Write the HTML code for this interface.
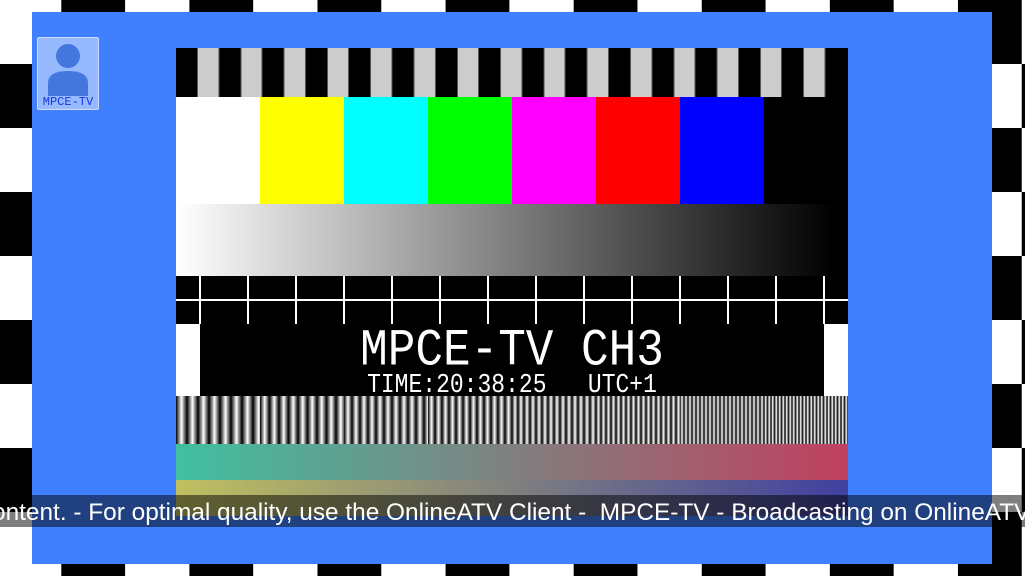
<!DOCTYPE html>
<html><head><meta charset="utf-8"><style>
*{margin:0;padding:0;box-sizing:border-box}
body{width:1025px;height:576px;overflow:hidden;position:relative;background:#fff;
background-image:conic-gradient(#000 25%,#fff 0 50%,#000 0 75%,#fff 0);
background-size:128.1px 128px;background-position:-3px 0}
.a{position:absolute}
.frame{left:32px;top:12px;width:960px;height:552px;background:#4080ff}
.card{left:176px;top:48px;width:672px;height:468px;background:#000;overflow:hidden}
.stripes{left:0;top:0;width:652px;height:49px;background:repeating-linear-gradient(90deg,#000 0 21px,#555 21px 22px,#ccc 22px 42.3px,#555 42.3px 43.3px)}
.bars{left:0;top:49px;height:107px;width:672px;display:flex}
.bars div{width:84px;height:100%}
.ramp{left:0;top:156px;width:659px;height:72px;background:linear-gradient(90deg,#fff,#000)}
.grid{left:0;top:228px;width:672px;height:48px;
background:linear-gradient(#fff,#fff) 0 23px/100% 2px no-repeat,
repeating-linear-gradient(90deg,transparent 0 23px,#fff 23px 25px,transparent 25px 48px)}
.wb{top:276px;width:24px;height:72px;background:#fff}
.title{left:0;width:672px;text-align:center;color:#fff;font-family:"Liberation Mono",monospace}
.sweep{top:348px;height:48px;width:84px}
.g1{left:0;top:396px;width:672px;height:36px;background:linear-gradient(90deg,#40c0a0,#808080 50%,#c04060)}
.g2{left:0;top:432px;width:672px;height:36px;background:linear-gradient(90deg,#c0c060,#808080 50%,#4040a0)}
.ticker{left:0;top:495px;width:1025px;height:32px;background:rgba(0,0,0,0.5);color:#fff;font-family:"Liberation Sans",sans-serif;font-size:24.4px;line-height:36px;white-space:nowrap;overflow:hidden}
.av{left:37px;top:37px;width:62px;height:73px;background:rgba(255,255,255,0.45);border:1px solid rgba(255,255,255,0.5);border-radius:2px}
</style></head><body>
<div class="a frame"></div>
<div class="a av">
<svg class="a" style="left:0;top:0" width="62" height="60" viewBox="0 0 62 60">
<circle cx="30" cy="18" r="12" fill="#4477dd"/>
<path d="M10 58 V45 Q10 33 30 33 Q50 33 50 45 V58 Z" fill="#4477dd"/>
</svg>
<div class="a" style="left:0;top:58px;width:60px;text-align:center;color:#1838e0;font-family:'Liberation Mono',monospace;font-size:12px;line-height:12px">MPCE-TV</div>
</div>
<div class="a card">
<div class="a stripes"></div>
<div class="a bars"><div style="background:#fff"></div><div style="background:#ff0"></div><div style="background:#0ff"></div><div style="background:#0f0"></div><div style="background:#f0f"></div><div style="background:#f00"></div><div style="background:#00f"></div><div style="background:#000"></div></div>
<div class="a ramp"></div>
<div class="a grid"></div>
<div class="a wb" style="left:0"></div>
<div class="a wb" style="left:648px"></div>
<div class="a title" style="top:276px;font-size:46px;line-height:48px;transform:scaleY(1.12);transform-origin:0 0">MPCE-TV CH3</div>
<div class="a title" style="top:322px;font-size:23px;line-height:26px;white-space:pre;transform:scaleY(1.15);transform-origin:0 0">TIME:20:38:25   UTC+1</div>
<div class="a sweep" style="left:0;background:repeating-linear-gradient(90deg,#000,#fff 5.5px,#000 11px)"></div>
<div class="a sweep" style="left:84px;background:repeating-linear-gradient(90deg,#000,#fff 4.75px,#000 9.5px)"></div>
<div class="a sweep" style="left:168px;background:repeating-linear-gradient(90deg,#000,#fff 4px,#000 8px)"></div>
<div class="a sweep" style="left:252px;background:repeating-linear-gradient(90deg,#000,#fff 3.5px,#000 7px)"></div>
<div class="a sweep" style="left:336px;background:repeating-linear-gradient(90deg,#000,#fff 3px,#000 6px)"></div>
<div class="a sweep" style="left:420px;background:repeating-linear-gradient(90deg,#000,#fff 2.5px,#000 5px)"></div>
<div class="a sweep" style="left:504px;background:repeating-linear-gradient(90deg,#000,#fff 2px,#000 4px)"></div>
<div class="a sweep" style="left:588px;background:repeating-linear-gradient(90deg,#000,#fff 1.75px,#000 3.5px)"></div>
<div class="a g1"></div>
<div class="a g2"></div>
</div>
<div class="a ticker"><span style="margin-left:-8px">ontent. - For optimal quality, use the OnlineATV Client -&nbsp; MPCE-TV - Broadcasting on OnlineATV</span></div>
</body></html>
